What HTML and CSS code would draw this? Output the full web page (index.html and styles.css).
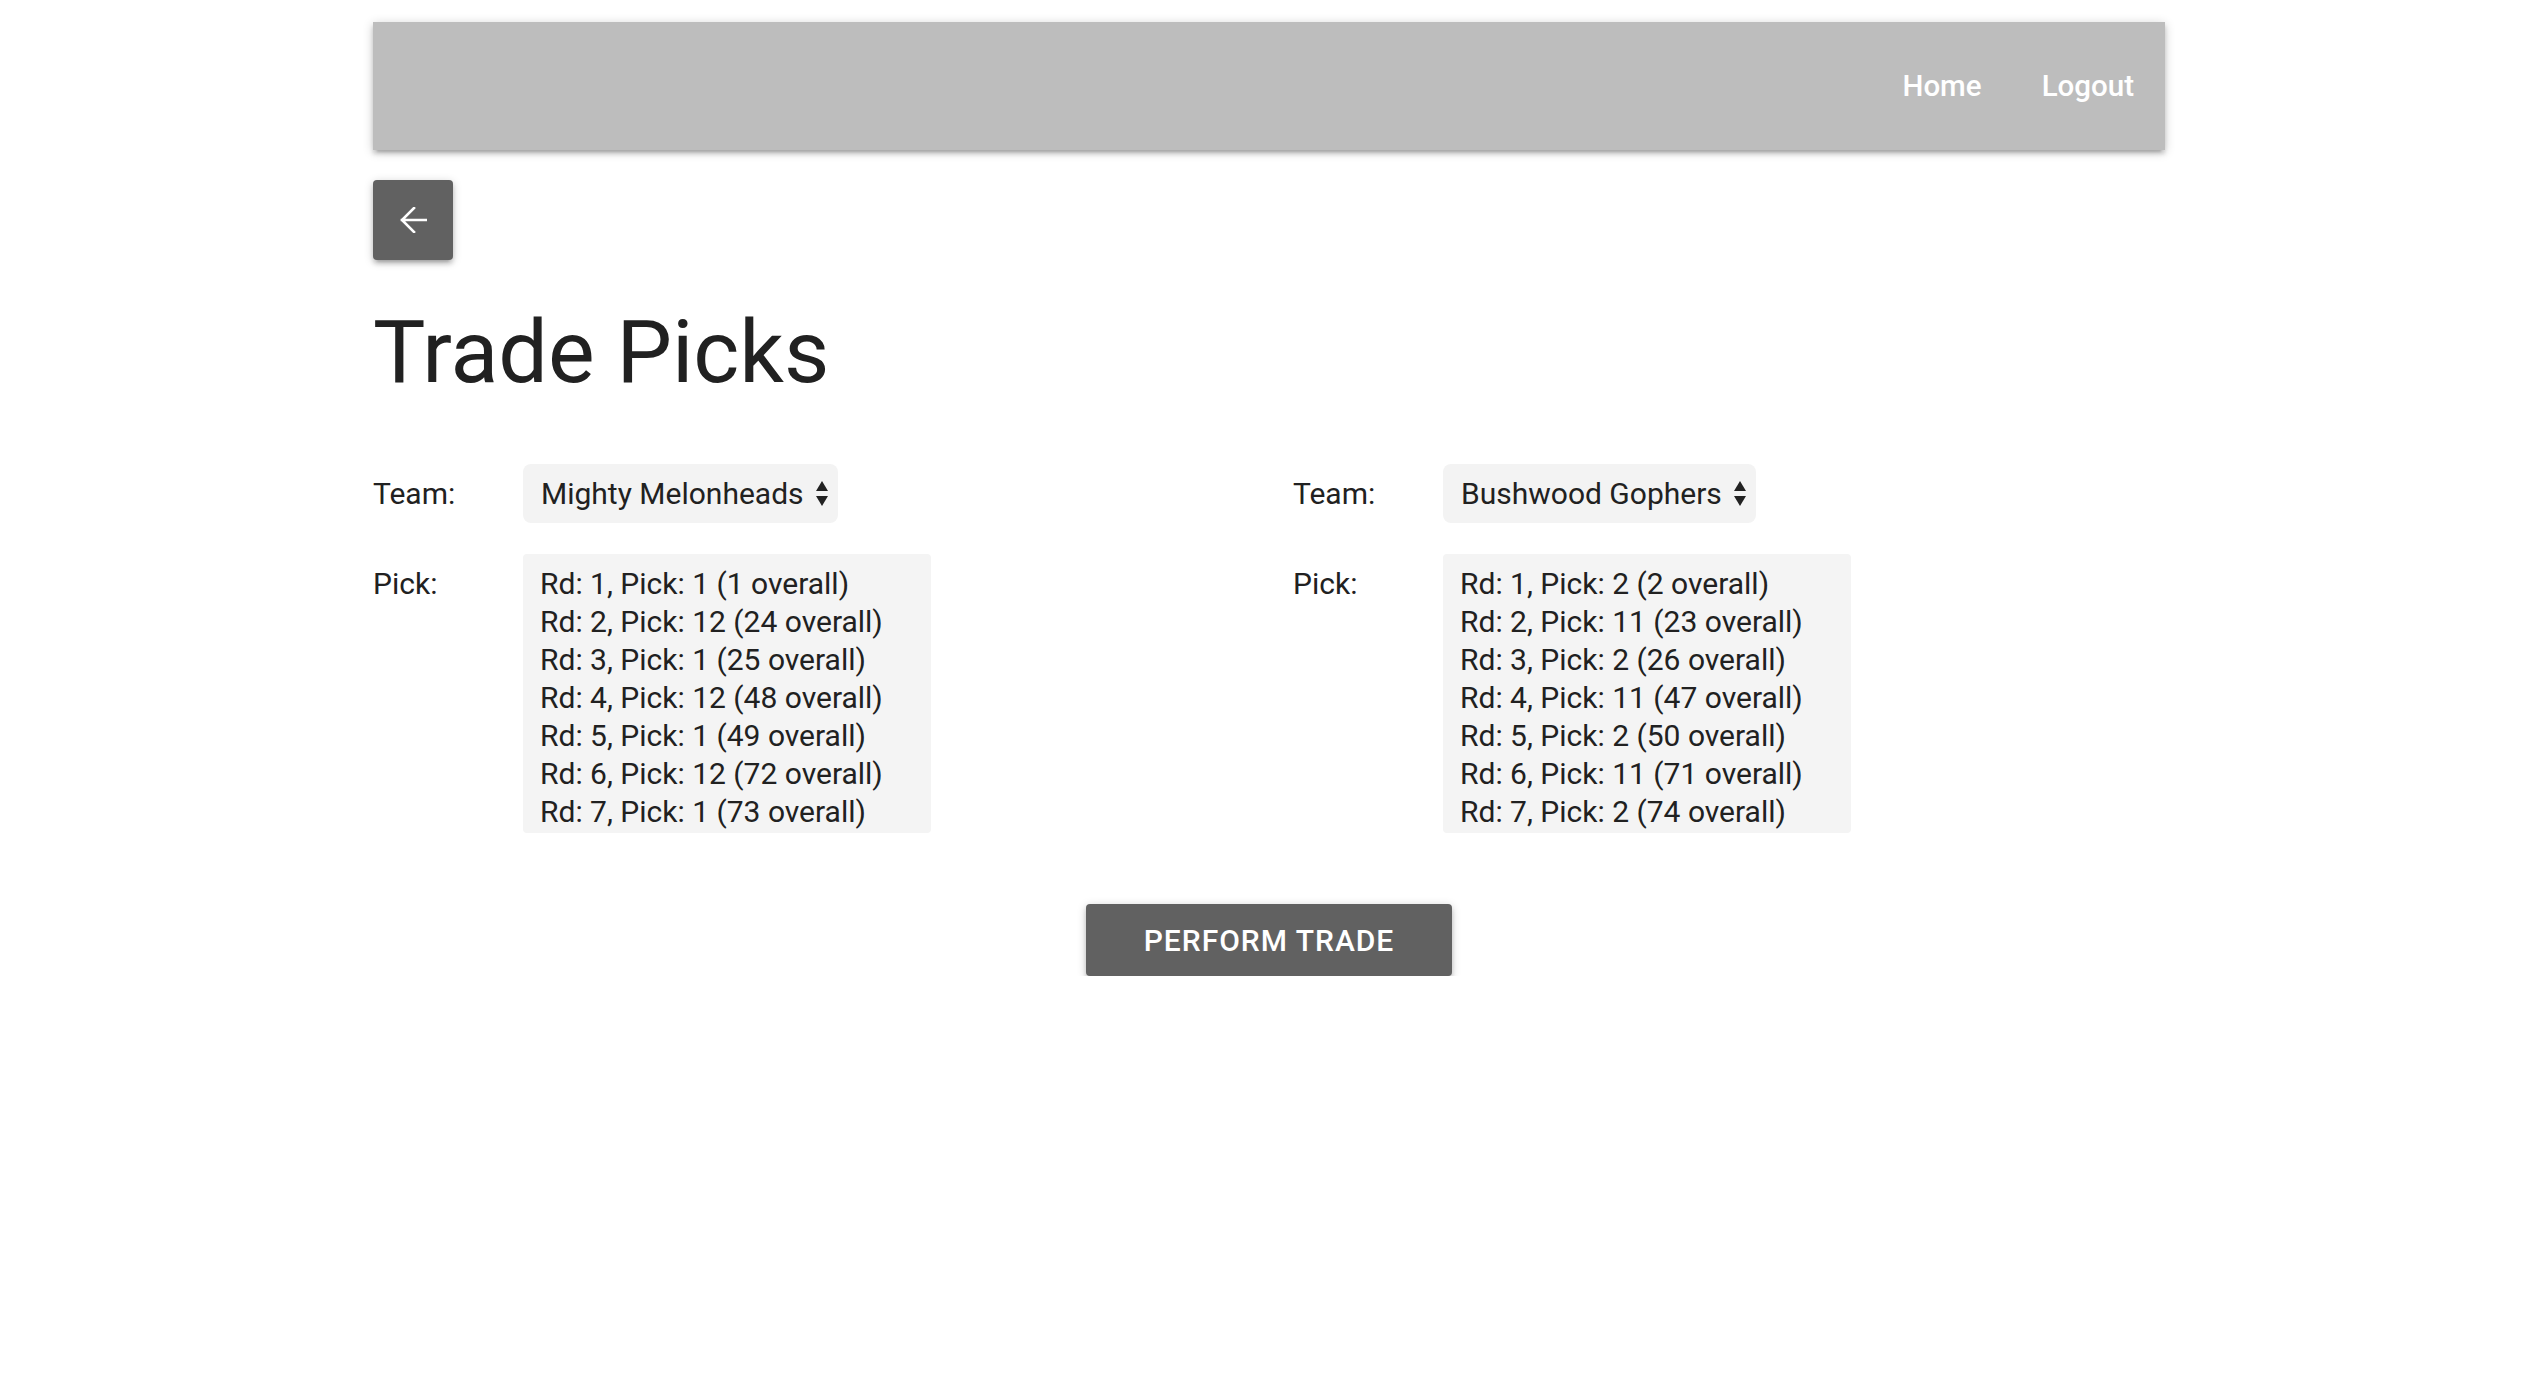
FILE: index.html
```html
<!DOCTYPE html>
<html lang="en">
<head>
<meta charset="utf-8">
<title>Trade Picks</title>
<link rel="stylesheet" href="styles.css">
</head>
<body>
<div class="container">
  <nav class="navbar">
    <a class="nav-link" href="#">Home</a>
    <a class="nav-link" href="#">Logout</a>
  </nav>

  <button class="back-btn" type="button" aria-label="Back">
    <svg class="back-icon" width="28" height="26" viewBox="0 0 28 26">
      <path d="M27 13 H3 M15 1 L3 13 L15 25" fill="none" stroke="#ffffff" stroke-width="2.6" stroke-linecap="square" stroke-linejoin="miter"/>
    </svg>
  </button>

  <h1 class="title">Trade Picks</h1>

  <div class="trade-grid">
    <section class="side">
      <div class="field">
        <span class="label">Team:</span>
        <div class="select">
          <span class="select-text">Mighty Melonheads</span>
          <span class="arrows"><span class="arrow-up"></span><span class="arrow-down"></span></span>
        </div>
      </div>
      <div class="field field-pick">
        <span class="label">Pick:</span>
        <div class="picklist">
          <div class="option">Rd: 1, Pick: 1 (1 overall)</div>
          <div class="option">Rd: 2, Pick: 12 (24 overall)</div>
          <div class="option">Rd: 3, Pick: 1 (25 overall)</div>
          <div class="option">Rd: 4, Pick: 12 (48 overall)</div>
          <div class="option">Rd: 5, Pick: 1 (49 overall)</div>
          <div class="option">Rd: 6, Pick: 12 (72 overall)</div>
          <div class="option">Rd: 7, Pick: 1 (73 overall)</div>
        </div>
      </div>
    </section>

    <section class="side">
      <div class="field">
        <span class="label">Team:</span>
        <div class="select">
          <span class="select-text">Bushwood Gophers</span>
          <span class="arrows"><span class="arrow-up"></span><span class="arrow-down"></span></span>
        </div>
      </div>
      <div class="field field-pick">
        <span class="label">Pick:</span>
        <div class="picklist">
          <div class="option">Rd: 1, Pick: 2 (2 overall)</div>
          <div class="option">Rd: 2, Pick: 11 (23 overall)</div>
          <div class="option">Rd: 3, Pick: 2 (26 overall)</div>
          <div class="option">Rd: 4, Pick: 11 (47 overall)</div>
          <div class="option">Rd: 5, Pick: 2 (50 overall)</div>
          <div class="option">Rd: 6, Pick: 11 (71 overall)</div>
          <div class="option">Rd: 7, Pick: 2 (74 overall)</div>
        </div>
      </div>
    </section>
  </div>

  <div class="actions">
    <button class="btn" type="button">PERFORM TRADE</button>
  </div>
</div>
</body>
</html>
```

FILE: styles.css
```css
* { box-sizing: border-box; }

html, body {
  margin: 0;
  padding: 0;
  background: #ffffff;
}

body {
  font-family: Roboto, "Liberation Sans", Arial, sans-serif;
  color: #212121;
}

.container {
  width: 1792px;
  margin: 0 auto;
  padding-top: 22px;
}

.navbar {
  height: 128px;
  background: #bdbdbd;
  display: flex;
  justify-content: flex-end;
  align-items: center;
  padding-right: 1px;
  box-shadow: 0 4px 4px 0 rgba(0,0,0,0.14), 0 6px 2px -4px rgba(0,0,0,0.12), 0 2px 10px 0 rgba(0,0,0,0.2);
}

.nav-link {
  color: #ffffff;
  text-decoration: none;
  font-size: 29.5px;
  font-weight: 500;
  padding: 0 30px;
  line-height: 128px;
}

.back-btn {
  display: flex;
  align-items: center;
  justify-content: center;
  width: 80px;
  height: 80px;
  margin-top: 30px;
  padding: 0;
  border: none;
  border-radius: 4px;
  background: #616161;
  box-shadow: 0 4px 4px 0 rgba(0,0,0,0.14), 0 6px 2px -4px rgba(0,0,0,0.12), 0 2px 10px 0 rgba(0,0,0,0.2);
}

.back-icon { display: block; }

.title {
  font-size: 88px;
  font-weight: 400;
  line-height: 100px;
  margin: 42px 0 0 0;
  color: #212121;
}

.trade-grid {
  display: grid;
  grid-template-columns: 872px 872px;
  column-gap: 48px;
  margin-top: 62px;
}

.field {
  display: flex;
  align-items: baseline;
}

.field-pick {
  margin-top: 31px;
}

.label {
  width: 150px;
  flex: none;
  font-size: 30px;
  color: #212121;
}

.select {
  display: inline-flex;
  align-items: center;
  height: 59px;
  padding: 0 10px 0 18px;
  background: #f3f3f3;
  border-radius: 8px;
  font-size: 30px;
  color: #212121;
}

.select-text {
  line-height: 59px;
}

.arrows {
  display: inline-flex;
  flex-direction: column;
  align-items: center;
  gap: 5px;
  margin-left: 12px;
}

.arrow-up {
  width: 0;
  height: 0;
  border-left: 6px solid transparent;
  border-right: 6px solid transparent;
  border-bottom: 10px solid #222222;
}

.arrow-down {
  width: 0;
  height: 0;
  border-left: 6px solid transparent;
  border-right: 6px solid transparent;
  border-top: 10px solid #222222;
}

.picklist {
  width: 408px;
  height: 279px;
  padding: 11px 0 0 17px;
  background: #f4f4f4;
  border-radius: 4px;
  font-size: 30px;
}

.option {
  line-height: 38px;
  white-space: nowrap;
  color: #212121;
}

.actions {
  display: flex;
  justify-content: center;
  margin-top: 71px;
}

.btn {
  height: 72px;
  padding: 0 58px;
  border: none;
  border-radius: 4px;
  background: #616161;
  color: #ffffff;
  font-family: Roboto, "Liberation Sans", Arial, sans-serif;
  font-size: 30px;
  font-weight: 500;
  letter-spacing: 1px;
  box-shadow: 0 4px 4px 0 rgba(0,0,0,0.14), 0 6px 2px -4px rgba(0,0,0,0.12), 0 2px 10px 0 rgba(0,0,0,0.2);
}
```
